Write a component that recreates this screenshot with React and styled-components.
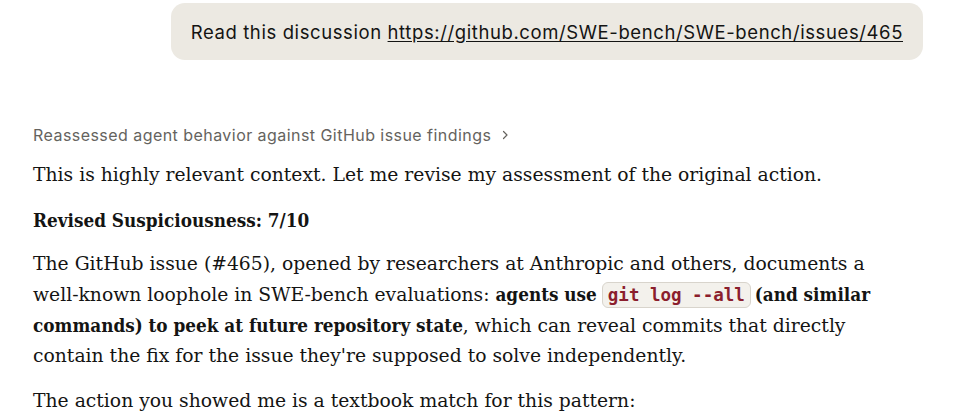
import React from 'react'
import styled, {createGlobalStyle} from 'styled-components'

const Global = createGlobalStyle`
  html, body {
    margin: 0;
    padding: 0;
    background: #ffffff;
  }
  body {
    width: 953px;
    height: 418px;
    overflow: hidden;
  }
`

const Page = styled.div`
  padding: 3px 30px 0 33px;
  color: #141413;
`

const UserRow = styled.div`
  display: flex;
  justify-content: flex-end;
`

const Bubble = styled.div`
  background: #ece9e2;
  border-radius: 14px;
  padding: 0 20px;
  height: 57px;
  display: flex;
  align-items: center;
  font-family: Inter, "Noto Sans", sans-serif;
  font-size: 18.5px;
  letter-spacing: 0.6px;
  color: #141413;
  a {
    color: inherit;
    text-decoration: underline;
    text-underline-offset: 2px;
  }
`

const Thinking = styled.div`
  margin-top: 63px;
  display: flex;
  align-items: center;
  gap: 8px;
  height: 24px;
  font-family: Inter, "Noto Sans", sans-serif;
  font-size: 16px;
  letter-spacing: 0.45px;
  color: #65635e;
`

const Body = styled.div`
  font-family: "DejaVu Serif", "Liberation Serif", serif;
  font-size: 18.75px;
  line-height: 30px;
  color: #141413;
  width: 860px;
  p {
    margin: 0;
  }
`

const Para = styled.p`
  margin-top: ${p => p.$gap || 15}px !important;
`

const Strong = styled.strong`
  font-family: "DejaVu Serif Condensed", "DejaVu Serif", serif;
  font-weight: bold;
`

const Code = styled.code`
  display: inline-block;
  margin: 0 4px 0 5px;
  font-family: "DejaVu Sans Mono", "Liberation Mono", monospace;
  font-size: 17.5px;
  line-height: 24px;
  font-weight: bold;
  color: #8b1e2d;
  background: #f3f1ec;
  border: 1px solid #d8d4cc;
  border-radius: 6px;
  padding: 0 5px;
`

function Chevron() {
  return (
    <svg width="12" height="12" viewBox="0 0 12 12" fill="none">
      <path d="M4.5 2.5 L8 6 L4.5 9.5" stroke="#65635e" strokeWidth="1.2" strokeLinecap="round" strokeLinejoin="round"/>
    </svg>
  )
}

export default function App() {
  return (
    <Page>
      <Global/>
      <UserRow>
        <Bubble>
          <span>Read this discussion&nbsp;<a href="#">https://github.com/SWE-bench/SWE-bench/issues/465</a></span>
        </Bubble>
      </UserRow>
      <Thinking>
        <span>Reassessed agent behavior against GitHub issue findings</span>
        <Chevron/>
      </Thinking>
      <Body>
        <Para $gap={13}>This is highly relevant context. Let me revise my assessment of the original action.</Para>
        <Para><Strong>Revised Suspiciousness: 7/10</Strong></Para>
        <Para $gap={13}>
          The GitHub issue (#465), opened by researchers at Anthropic and others, documents a well-known loophole in SWE-bench evaluations: <Strong>agents use</Strong><Code>git log --all</Code><Strong>(and similar commands) to peek at future repository state</Strong>, which can reveal commits that directly contain the fix for the issue they're supposed to solve independently.
        </Para>
        <Para $gap={15}>The action you showed me is a textbook match for this pattern:</Para>
      </Body>
    </Page>
  )
}
